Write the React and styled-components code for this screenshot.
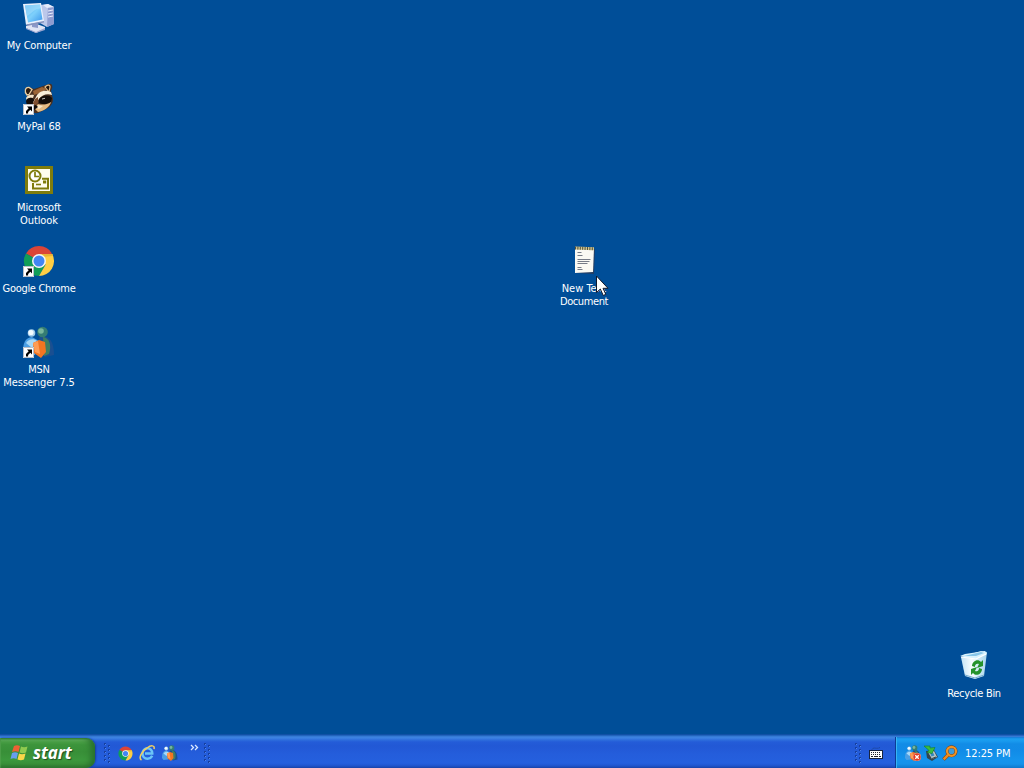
import React from 'react';
import styled, { createGlobalStyle } from 'styled-components';

const GlobalStyle = createGlobalStyle`
  * { box-sizing: border-box; }
  body { margin: 0; overflow: hidden; background: #004e98; }
  svg { display: block; flex: none; }
`;

const Screen = styled.div`
  display: flex;
  flex-direction: column;
  width: 1024px;
  height: 768px;
  background: #004e98;
  font-family: 'DejaVu Sans Condensed', 'DejaVu Sans', sans-serif;
  font-stretch: condensed;
  font-size: 11px;
  color: #fff;
  cursor: default;
`;

const Desktop = styled.main`
  position: relative;
  flex: 1;
`;

const Shortcut = styled.div`
  position: absolute;
  left: ${(p) => p.$x}px;
  top: ${(p) => p.$y}px;
  width: 78px;
  display: flex;
  flex-direction: column;
  align-items: center;
  gap: 5px;
`;

const Label = styled.span`
  display: block;
  line-height: 13px;
  letter-spacing: ${(p) => p.$spacing || 0}px;
  white-space: nowrap;
`;

const Caption = styled.div`
  display: flex;
  flex-direction: column;
  align-items: center;
`;

const Pointer = styled.svg`
  position: absolute;
  left: 595px;
  top: 275px;
`;

const Taskbar = styled.footer`
  display: flex;
  height: 34px;
  background: linear-gradient(
    to bottom,
    #0a4a9c 0, #1657ae 1px, #2e72cc 2px, #3c82de 3px, #3c82e2 4px, #2d6ddc 6px,
    #245cd8 8px, #2258d5 12px, #245ddb 20px, #2560de 29px, #2259d4 31px, #1c4cbb 33px, #1941a5 34px
  );
`;

const StartButton = styled.div`
  display: flex;
  align-items: center;
  gap: 4px;
  width: 95px;
  height: 30px;
  margin-top: 4px;
  padding: 0 0 1px 10px;
  border-radius: 0 9px 9px 0;
  background: linear-gradient(
    to bottom,
    #2e7a33 0, #5fae5b 2px, #4aa046 4px, #3c943b 7px, #388f38 14px, #3c983d 22px, #3a913a 26px, #2c7530 30px
  );
  box-shadow: inset -5px 0 6px -1px #28702c, inset 1px 0 1px #4f9f4c, 1px 0 2px #173f9c;
`;

const StartText = styled.span`
  font-family: 'Open Sans', 'Noto Sans', sans-serif;
  font-stretch: normal;
  font-size: 17px;
  line-height: 22px;
  font-weight: 700;
  font-style: italic;
  letter-spacing: -0.1px;
  text-shadow: 1px 1px 1px #1f4d20;
`;

const Bar = styled.div`
  display: flex;
  align-items: center;
  height: 30px;
  margin-top: 4px;
`;

const QuickLaunch = styled(Bar)`
  flex: 1;
  padding-left: 9px;
`;

const LaunchItems = styled.div`
  display: flex;
  align-items: center;
  gap: 6px;
  margin-left: 7px;
`;

const Chevron = styled.svg`
  margin: 0 5px 11px 12px;
`;

const LanguageBar = styled(Bar)`
  gap: 7px;
  width: 40px;
`;

const Tray = styled.div`
  display: flex;
  align-items: center;
  gap: 3px;
  width: 129px;
  height: 31px;
  margin-top: 3px;
  padding: 1px 0 0 9px;
  border-left: 1px solid #0c3c94;
  box-shadow: inset 1px 0 #37b5f4;
  background: linear-gradient(
    to bottom,
    #1678d4 0, #1b9ff0 2px, #199aee 4px, #128ce6 7px, #118be7 13px, #1594ed 23px, #1592ea 27px, #0f77cb 31px
  );
`;

const Clock = styled(Label)`
  margin-left: 4px;
`;

const ShortcutArrow = () => (
  <g>
    <rect x="0" y="21" width="11" height="11" fill="#fff" />
    <path d="M.5 21.500h10v10h-10z" fill="none" stroke="#b9bfc9" />
    <path d="M4 23.500h5v5l-1.700-1.700-2.200 2.100v1.600H3v-2.600l2.700-2.600z" fill="#000" />
  </g>
);

const ComputerIcon = () => (
  <svg width="32" height="32" viewBox="0 0 32 32">
    <defs>
      <linearGradient id="screen" x1="0" y1="0" x2="1" y2="1">
        <stop offset="0" stopColor="#4caaf2" />
        <stop offset=".5" stopColor="#7ed0fb" />
        <stop offset="1" stopColor="#3a96ec" />
      </linearGradient>
    </defs>
    <path d="M17 3l8-1 6 3v17l-7 3-7-4z" fill="#bcc8ea" />
    <path d="M25 5l6 0v17l-7 3z" fill="#8e9cd0" />
    <path d="M20 3l5-1 6 3-7 1z" fill="#e5ecfb" />
    <path d="M25 9l5-1M25 12l5-1M25 15l5-1" stroke="#e8eefc" />
    <path d="M3 24l8-3 11 4v2l-9 4-10-5z" fill="#dfe4f4" />
    <path d="M3 26l10 4 9-4v2l-9 3-10-4z" fill="#9aa4d0" />
    <path d="M9 20h6v6l-6-1z" fill="#8b98c8" />
    <path d="M0 2L18 1l3 18-18 4z" fill="#e8f0fc" />
    <path d="M2 3.500l15-1 2.500 15L5 20.500z" fill="url(#screen)" />
    <path d="M2 3.500l15-1 .5 4C12 6 9 11 4 14z" fill="#a3defc" opacity=".6" />
    <path d="M3 22.500l18-3.500v1.500L4 24z" fill="#8893bd" />
  </svg>
);

const RaccoonIcon = () => (
  <svg width="32" height="32" viewBox="0 0 32 32">
    <path d="M4 12C1 9 2 4 6 4l5 2 9-3 6-2c4-1 4 4 2 7l2 8c0 6-4 9-9 11l-6 3c-6 1-10-4-10-9z" fill="#4a3020" />
    <path d="M4 12C1 9 2 4 6 4.500l3 2-3 5z" fill="#2a1a10" stroke="#e9cfa3" strokeWidth="1.300" />
    <path d="M22 4c2-2 5-3 5 0l-1 5z" fill="#20140c" stroke="#dfbc89" strokeWidth="1.200" />
    <path d="M10 8l9-4 5 2-7 4-6 2z" fill="#9b6436" />
    <path d="M3 15c1-3 5-4 8-3l-1 3c-3-1-4 0-6 3z" fill="#f4e5ca" />
    <path d="M13 14c2-5 8-8 15-5l1 3c-5-2-10 0-13 4l-4 5-2-2z" fill="#f8edd8" />
    <path d="M3 18c1-4 7-4 8-1l-2 5-5 1z" fill="#140d09" />
    <path d="M16 16c3-4 10-5 13-1l-1 4c-5 3-9 2-12 1z" fill="#140d09" />
    <path d="M12 16l3-2v6l-3 4-3-1z" fill="#7f5031" />
    <path d="M15 21c4 1 9 1 13-2-1 5-7 9-13 10l-4-4z" fill="#e6bb83" />
    <path d="M12 24l4-2 4 1-4 3z" fill="#f7e6c8" />
    <path d="M9 23l4-1 2 2-4 3z" fill="#100a08" />
    <path d="M19 16l3-.7" stroke="#d8d5ce" strokeWidth=".9" />
    <ShortcutArrow />
  </svg>
);

const OutlookIcon = () => (
  <svg width="32" height="32" viewBox="0 0 32 32">
    <path d="M2 2h28v28H2z" fill="#7f7c0c" />
    <path d="M5 5h22v22H5z" fill="#fffdee" />
    <path d="M10 19v5.500h15V14.800h-6" fill="none" stroke="#7f7c0c" strokeWidth="2" />
    <circle cx="12" cy="12" r="5.500" fill="#fff" stroke="#7f7c0c" strokeWidth="2" />
    <path d="M12 8v4.500h4" fill="none" stroke="#7f7c0c" strokeWidth="1.700" />
    <path d="M13 20.500h5" stroke="#7f7c0c" strokeWidth="1.600" />
    <path d="M20 16.500h3.200v3H20z" fill="#7f7c0c" />
  </svg>
);

const ChromeShape = () => (
  <g>
    <path d="M16 16L3 8.500A15 15 0 0 1 29 8.500z" fill="#db4437" />
    <path d="M16 16L3 8.500A15 15 0 0 0 16 31l6.500-11.300z" fill="#109d58" />
    <path d="M16 9h13.300A15 15 0 0 1 16 31l6.500-11.300z" fill="#ffce44" />
    <path d="M16 9h13.300l.7 2-12 1z" fill="#e9b333" />
    <circle cx="16" cy="16" r="7" fill="#f5f5f5" />
    <circle cx="16" cy="16" r="5.500" fill="#4285f4" />
  </g>
);

const ChromeIcon = ({ size = 32, shortcut }) => (
  <svg width={size} height={size} viewBox="0 0 32 32">
    <ChromeShape />
    {shortcut && <ShortcutArrow />}
  </svg>
);

const MessengerShape = () => (
  <g>
    <path d="M16 11c8-3 15 2 15 18l-9 2-7-8z" fill="#1a4f91" />
    <path d="M20 11c6 1 9 7 6 17l-5 2z" fill="#3e7d62" />
    <path d="M0 26C0 17 2 12 9 11l7 4-4 14-9 1z" fill="#4b9fe5" />
    <path d="M3 17c2-4 8-5 11-2l-5 7z" fill="#a7d8f7" />
    <path d="M10 17l6-3 6 2 1 10-5 6-7-5z" fill="#f27522" />
    <path d="M10 17l5-2 2 13-5-2z" fill="#ff9c54" />
    <circle cx="8.500" cy="7" r="3.800" fill="#a4cdeb" />
    <circle cx="8" cy="6.500" r="2.600" fill="#f3fbff" />
    <circle cx="19.500" cy="6" r="5.300" fill="#347c74" />
    <circle cx="18" cy="5" r="2.800" fill="#78b79d" />
  </g>
);

const MessengerIcon = ({ size = 32, shortcut, offline }) => (
  <svg width={size} height={size} viewBox="0 0 32 32">
    <MessengerShape />
    {shortcut && <ShortcutArrow />}
    {offline && (
      <g>
        <circle cx="24" cy="24" r="8" fill="#e23820" stroke="#f6b2a0" />
        <path d="M20.500 20.500l7 7m0-7l-7 7" stroke="#fff" strokeWidth="2.800" />
      </g>
    )}
  </svg>
);

const NotepadIcon = () => (
  <svg width="32" height="32" viewBox="0 0 32 32">
    <path d="M8 3l19 1-1 25-18-1z" fill="#263f63" />
    <path d="M7 2l19 1-1 24-18 1z" fill="#faf9f3" />
    <path d="M7 1.500l19 .7v3L7 4.500z" fill="#d0c68f" />
    <path d="M7 3l19 .8" stroke="#52503e" strokeWidth="3" strokeDasharray="1 1.400" />
    <path d="M9.500 7.500h4M9.500 10.500h5M9.500 14.500h13M9.500 16.500h12M9.500 18.500h10M9.500 22.500h4M9.500 24.500h5" stroke="#686d7b" strokeWidth=".9" />
  </svg>
);

const RecycleIcon = () => (
  <svg width="32" height="32" viewBox="0 0 32 32">
    <defs>
      <linearGradient id="bin">
        <stop offset="0" stopColor="#9dd1ef" />
        <stop offset=".4" stopColor="#eefaff" />
        <stop offset="1" stopColor="#a9d6ed" />
      </linearGradient>
    </defs>
    <path d="M3 7L23 1l6 1-3 24-9 3-10-3z" fill="url(#bin)" />
    <path d="M2 6L7 4l20-3 2 3-11 5z" fill="#d8f3ff" />
    <path d="M6 6l17-4 3 1-8 3z" fill="#86c6ea" />
    <path d="M3 7l15 3-1 18-10-3z" fill="#fff" opacity=".4" />
    <path d="M3 7l15 2 10-5" fill="none" stroke="#fff" strokeWidth="1.200" />
    <path d="M7 25l10 3 9-3" fill="none" stroke="#77acd0" />
    <path d="M14 16c0-5 6-8 9-4l2-2v6l-6 2 2-4c-3-1-4 1-4 3zM24 19c0 5-6 8-9 4l-2 2v-6l6-2-2 4c3 1 4-1 4-3z" fill="#25932b" />
  </svg>
);

const CursorIcon = () => (
  <Pointer width="14" height="22" viewBox="0 0 14 22">
    <path d="M1.500 1v16.500l3.800-3.500 3 6.500 2.500-1.200-2.800-6h5z" fill="#fff" stroke="#10192c" />
  </Pointer>
);

const WindowsIcon = () => (
  <svg width="19" height="18" viewBox="0 0 19 18">
    <path d="M4 2c2-1 4-1 6 0L8.500 8c-2-1-4-1-6.500 0z" fill="#ed6134" />
    <path d="M11 2.500c2 1 4 1 6.500 0L16 8.500c-2.500 1-4 1-6.500 0z" fill="#8fca4f" />
    <path d="M2 9c2-1 4-1 6 0l-1.500 6c-2-1-4-1-6 0z" fill="#679eee" />
    <path d="M9 9.500c2 1 4 1 6.500 0l-1.500 6c-2.500 1-4 1-6.500 0z" fill="#f9d749" />
  </svg>
);

const ExplorerIcon = () => (
  <svg width="17" height="16" viewBox="0 0 17 16">
    <path d="M13.200 10.800c-1 2-2.700 2.900-4.700 2.900-3 0-5-2.200-5-5.200s2.200-5.200 5-5.200 5 2.200 4.800 5.200H6" fill="none" stroke="#6bc5f7" strokeWidth="2.500" />
    <path d="M2.500 15C-1 13 3 6 8 3c4-3 8-3 7 1" fill="none" stroke="#f2cf61" strokeWidth="1.500" />
  </svg>
);

const Grip = () => (
  <svg width="7" height="22" viewBox="0 0 7 22">
    {[0, 4, 8, 12, 16].map((y) => (
      <g key={y}>
        <path d={`M0 ${y + 1}h2v2H0zM4 ${y + 3}h2v2H4z`} fill="#173f9f" />
        <path d={`M1 ${y + 2}h1v1H1zM5 ${y + 4}h1v1H5z`} fill="#5086ec" />
      </g>
    ))}
  </svg>
);

const MoreIcon = () => (
  <Chevron width="9" height="7" viewBox="0 0 9 7">
    <path d="M1 1l2.500 2.500L1 6M5 1l2.500 2.500L5 6" fill="none" stroke="#dce9ff" strokeWidth="1.300" />
  </Chevron>
);

const KeyboardIcon = () => (
  <svg width="14" height="14" viewBox="0 0 14 14">
    <path d="M3 3.500c2-3 4 0 8-2" fill="none" stroke="#193c83" strokeDasharray="1 1" />
    <rect x=".5" y="4.500" width="13" height="8" fill="#fff" stroke="#17243f" />
    <path d="M2 6.500h10M2 8.500h10" stroke="#20242e" strokeDasharray="1 1" />
    <path d="M2 10.500h2m1 0h4m1 0h2" stroke="#20242e" />
  </svg>
);

const DeviceIcon = () => (
  <svg width="15" height="16" viewBox="0 0 15 16">
    <path d="M2 6l8-1 4 7-6 4-5-3z" fill="#33454d" />
    <path d="M4 7l6-1 3 6-5 2z" fill="#bac6c5" />
    <path d="M6 8l3-.5 1.500 3-3 1z" fill="#368ac0" />
    <path d="M0 1l6 0v2l5-.5-3 6-5-1 2-2z" fill="#39bd3f" stroke="#167b2a" strokeWidth=".6" />
    <path d="M8 13.500l4-1.500" stroke="#324149" />
  </svg>
);

const SearchIcon = () => (
  <svg width="16" height="16" viewBox="0 0 16 16">
    <circle cx="9.500" cy="6.300" r="4.500" fill="#3c9bdb" stroke="#713911" strokeWidth="3" />
    <path d="M6 10l-4.500 4.500" stroke="#7d3c0e" strokeWidth="3.500" />
    <circle cx="9.500" cy="6.300" r="4.500" fill="none" stroke="#f09224" strokeWidth="2.200" />
    <path d="M6 10l-4.300 4.300" stroke="#ef8b20" strokeWidth="2.500" />
  </svg>
);

const items = [
  { x: 0, y: 2, icon: <ComputerIcon />, lines: [['My Computer', -0.2]] },
  { x: 0, y: 83, icon: <RaccoonIcon />, lines: [['MyPal 68', -0.1]] },
  { x: 0, y: 164, icon: <OutlookIcon />, lines: [['Microsoft', -0.1], ['Outlook', -0.1]] },
  { x: 0, y: 245, icon: <ChromeIcon shortcut />, lines: [['Google Chrome', -0.3]] },
  { x: 0, y: 326, icon: <MessengerIcon shortcut />, lines: [['MSN', -0.2], ['Messenger 7.5', -0.1]] },
  { x: 545, y: 245, icon: <NotepadIcon />, lines: [['New Text', 0], ['Document', -0.4]] },
  { x: 935, y: 650, icon: <RecycleIcon />, lines: [['Recycle Bin', -0.3]] },
];

export default function App() {
  return (
    <Screen>
      <GlobalStyle />
      <Desktop>
        {items.map(({ x, y, icon, lines }) => (
          <Shortcut key={lines[0][0]} $x={x} $y={y}>
            {icon}
            <Caption>
              {lines.map(([text, spacing]) => (
                <Label key={text} $spacing={spacing}>{text}</Label>
              ))}
            </Caption>
          </Shortcut>
        ))}
        <CursorIcon />
      </Desktop>
      <Taskbar>
        <StartButton>
          <WindowsIcon />
          <StartText>start</StartText>
        </StartButton>
        <QuickLaunch>
          <Grip />
          <LaunchItems>
            <ChromeIcon size={15} />
            <ExplorerIcon />
            <MessengerIcon size={16} />
          </LaunchItems>
          <MoreIcon />
          <Grip />
        </QuickLaunch>
        <LanguageBar>
          <Grip />
          <KeyboardIcon />
        </LanguageBar>
        <Tray>
          <MessengerIcon size={16} offline />
          <DeviceIcon />
          <SearchIcon />
          <Clock $spacing={-0.1}>12:25 PM</Clock>
        </Tray>
      </Taskbar>
    </Screen>
  );
}
